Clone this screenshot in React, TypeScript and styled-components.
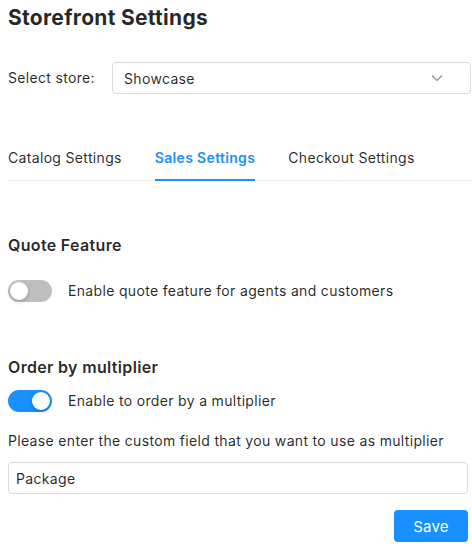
import React, { useState } from "react";
import styled, { createGlobalStyle } from "styled-components";

const colors = {
  text: "rgba(0, 0, 0, 0.85)",
  primary: "#1890ff",
  border: "#d9d9d9",
  divider: "#e8e8e8",
  switchOff: "rgba(0, 0, 0, 0.25)",
};

const GlobalStyle = createGlobalStyle`
  html, body {
    margin: 0;
    padding: 0;
    background: #fff;
  }
  body {
    font-family: Inter, "Noto Sans", "Liberation Sans", sans-serif;
    font-size: 14px;
    letter-spacing: 0.33px;
    color: ${colors.text};
  }
`;

const tabs = ["Catalog Settings", "Sales Settings", "Checkout Settings"];

const App = () => {
  const [quote, setQuote] = useState(false);
  const [multiplier, setMultiplier] = useState(true);
  const [active, setActive] = useState(1);

  return (
    <>
      <GlobalStyle />
      <Page>
        <Title>Storefront Settings</Title>

        <SelectRow>
          <SelectLabel>Select store:</SelectLabel>
          <SelectBox>
            <span>Showcase</span>
            <svg width="12" height="8" viewBox="0 0 12 8" fill="none">
              <path d="M1 1.5 L6 6.5 L11 1.5" stroke="#8c8c8c" strokeWidth="1.1" />
            </svg>
          </SelectBox>
        </SelectRow>

        <TabBar>
          {tabs.map((t, i) => (
            <Tab key={t} $active={i === active} onClick={() => setActive(i)}>
              {t}
            </Tab>
          ))}
        </TabBar>

        <SectionTitle $top={52}>Quote Feature</SectionTitle>
        <SwitchRow $top={23}>
          <Switch $on={quote} onClick={() => setQuote(!quote)}>
            <Handle $on={quote} />
          </Switch>
          <span>Enable quote feature for agents and customers</span>
        </SwitchRow>

        <SectionTitle $top={53}>Order by multiplier</SectionTitle>
        <SwitchRow $top={11}>
          <Switch $on={multiplier} onClick={() => setMultiplier(!multiplier)}>
            <Handle $on={multiplier} />
          </Switch>
          <span>Enable to order by a multiplier</span>
        </SwitchRow>

        <FieldLabel>Please enter the custom field that you want to use as multiplier</FieldLabel>
        <TextInput defaultValue="Package" />

        <Footer>
          <SaveButton>Save</SaveButton>
        </Footer>
      </Page>
    </>
  );
};

export default App;

const Page = styled.div`
  width: 464px;
  padding: 4px 0 0 8px;
  display: flex;
  flex-direction: column;
`;

const Title = styled.h1`
  margin: 0;
  font-size: 21px;
  line-height: 28px;
  font-weight: 700;
  letter-spacing: 0.3px;
  color: ${colors.text};
`;

const SelectRow = styled.div`
  display: flex;
  align-items: center;
  margin-top: 30px;
`;

const SelectLabel = styled.span`
  width: 104px;
  line-height: 22px;
`;

const SelectBox = styled.div`
  flex: 1;
  height: 32px;
  box-sizing: border-box;
  border: 1px solid ${colors.border};
  border-radius: 4px;
  display: flex;
  align-items: center;
  justify-content: space-between;
  padding: 0 27px 0 11px;
  margin-right: 1px;
`;

const TabBar = styled.div`
  display: flex;
  gap: 33px;
  margin-top: 41px;
  border-bottom: 1px solid ${colors.divider};
`;

const Tab = styled.div<{ $active: boolean }>`
  padding: 12px 0 10px;
  line-height: 22px;
  margin-bottom: -1px;
  cursor: pointer;
  color: ${(p) => (p.$active ? colors.primary : colors.text)};
  font-weight: ${(p) => (p.$active ? 600 : 400)};
  border-bottom: 2px solid ${(p) => (p.$active ? colors.primary : "transparent")};
`;

const SectionTitle = styled.h3<{ $top: number }>`
  margin: ${(p) => p.$top}px 0 0;
  font-size: 16px;
  line-height: 24px;
  font-weight: 600;
  color: ${colors.text};
`;

const SwitchRow = styled.div<{ $top: number }>`
  display: flex;
  align-items: center;
  gap: 16px;
  margin-top: ${(p) => p.$top}px;
  line-height: 22px;
`;

const Switch = styled.button<{ $on: boolean }>`
  position: relative;
  width: 44px;
  height: 22px;
  border: none;
  border-radius: 11px;
  padding: 0;
  flex-shrink: 0;
  cursor: pointer;
  background: ${(p) => (p.$on ? colors.primary : colors.switchOff)};
`;

const Handle = styled.span<{ $on: boolean }>`
  position: absolute;
  top: 2px;
  left: ${(p) => (p.$on ? "24px" : "2px")};
  width: 18px;
  height: 18px;
  border-radius: 50%;
  background: #fff;
  box-shadow: 0 2px 4px rgba(0, 35, 11, 0.2);
`;

const FieldLabel = styled.div`
  margin-top: 18px;
  line-height: 22px;
`;

const TextInput = styled.input`
  margin-top: 10px;
  width: 460px;
  height: 32px;
  box-sizing: border-box;
  border: 1px solid ${colors.border};
  border-radius: 4px;
  padding: 0 7px;
  font-family: inherit;
  font-size: 14px;
  letter-spacing: 0.33px;
  color: ${colors.text};
  outline: none;
`;

const Footer = styled.div`
  display: flex;
  justify-content: flex-end;
  margin-top: 16px;
  padding-right: 4px;
`;

const SaveButton = styled.button`
  width: 74px;
  height: 32px;
  border: none;
  border-radius: 4px;
  background: ${colors.primary};
  color: #fff;
  font-family: inherit;
  font-size: 15px;
  letter-spacing: 0.2px;
  cursor: pointer;
  box-shadow: 0 2px 0 rgba(0, 0, 0, 0.045);
`;
